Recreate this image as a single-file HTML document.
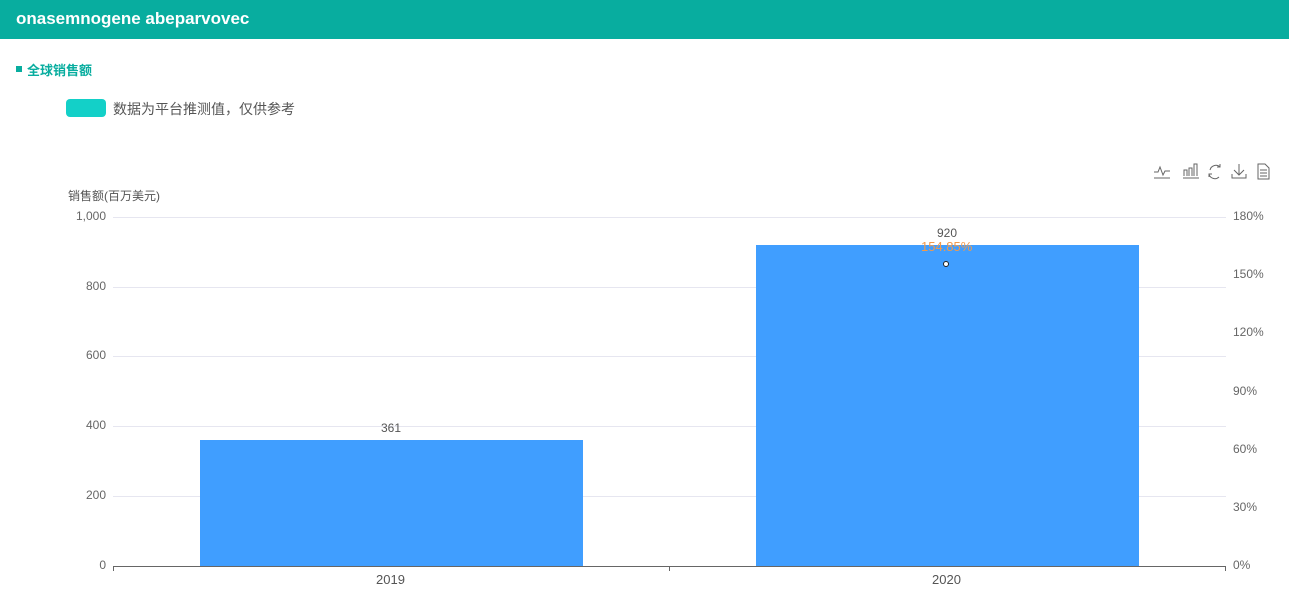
<!DOCTYPE html><html><head><meta charset="utf-8"><style>
body{margin:0;width:1289px;height:601px;background:#fff;font-family:"Liberation Sans","Noto Sans CJK SC",sans-serif;position:relative;overflow:hidden}
.a{position:absolute}
.hd{left:0;top:0;width:1289px;height:39px;background:#08ad9f;color:#fff;font-weight:bold;font-size:17px;line-height:38px;padding-left:16px;box-sizing:border-box}
.g{left:113px;width:1113px;height:1px;background:#e6e6f0}
.yl{left:40px;width:66px;text-align:right;font-size:12px;color:#666}
.yr{left:1233px;font-size:12px;color:#666}
</style></head><body>
<div class="a hd">onasemnogene abeparvovec</div>
<div class="a" style="left:16px;top:66px;width:6px;height:6px;background:#08ad9f"></div>
<div class="a" style="left:27px;top:60px;font-size:13px;font-weight:bold;color:#08ad9f">全球销售额</div>
<div class="a" style="left:66px;top:99px;width:40px;height:18px;border-radius:4px;background:#13d0c8"></div>
<div class="a" style="left:113px;top:99px;font-size:14px;color:#555">数据为平台推测值，仅供参考</div>
<div class="a" style="left:68px;top:187px;font-size:12px;color:#555">销售额(百万美元)</div>
<div class="a g" style="top:217px"></div><div class="a g" style="top:287px"></div><div class="a g" style="top:356px"></div><div class="a g" style="top:426px"></div><div class="a g" style="top:496px"></div>
<div class="a yl" style="top:209px">1,000</div><div class="a yl" style="top:279px">800</div><div class="a yl" style="top:348px">600</div><div class="a yl" style="top:418px">400</div><div class="a yl" style="top:488px">200</div><div class="a yl" style="top:558px">0</div>
<div class="a yr" style="top:209px">180%</div><div class="a yr" style="top:267px">150%</div><div class="a yr" style="top:325px">120%</div><div class="a yr" style="top:384px">90%</div><div class="a yr" style="top:442px">60%</div><div class="a yr" style="top:500px">30%</div><div class="a yr" style="top:558px">0%</div>
<div class="a" style="left:200px;top:440px;width:383px;height:126px;background:#409eff"></div>
<div class="a" style="left:756px;top:245px;width:383px;height:321px;background:#409eff"></div>
<div class="a" style="left:113px;top:566px;width:1113px;height:1px;background:#666"></div>
<div class="a" style="left:113px;top:566px;width:1px;height:5px;background:#666"></div>
<div class="a" style="left:669px;top:566px;width:1px;height:5px;background:#666"></div>
<div class="a" style="left:1225px;top:566px;width:1px;height:5px;background:#666"></div>
<div class="a" style="left:376px;top:572px;font-size:13px;color:#555">2019</div>
<div class="a" style="left:932px;top:572px;font-size:13px;color:#555">2020</div>
<div class="a" style="left:381px;top:421px;font-size:12px;color:#555">361</div>
<div class="a" style="left:937px;top:226px;font-size:12px;color:#555">920</div>
<div class="a" style="left:921px;top:239px;font-size:13px;color:#f39a4a">154.85%</div>
<div class="a" style="left:943px;top:261px;width:4px;height:4px;border:1.5px solid #222;border-radius:50%;background:#fff"></div>
<svg class="a" style="left:1150px;top:160px" width="130" height="22" fill="none" stroke="#666" stroke-width="1">
<path d="M4 12h4l2-5 3 8 2-4h5M4 18h16"/>
<path d="M33 18h16M34 16v-6h3v6M39 16v-8h3v8M44 16v-12h3v12"/>
<path d="M70 7a6 6 0 0 0-10 3M59 14a6 6 0 0 0 10 3M70 4v3h-3M59 17v-3h3"/>
<path d="M89 4v11M84 10l5 5 5-5M82 14v4h14v-4"/>
<path d="M108 4h7l4 4v11h-11zM110 10h7M110 13h7M110 16h7"/>
</svg>
</body></html>
